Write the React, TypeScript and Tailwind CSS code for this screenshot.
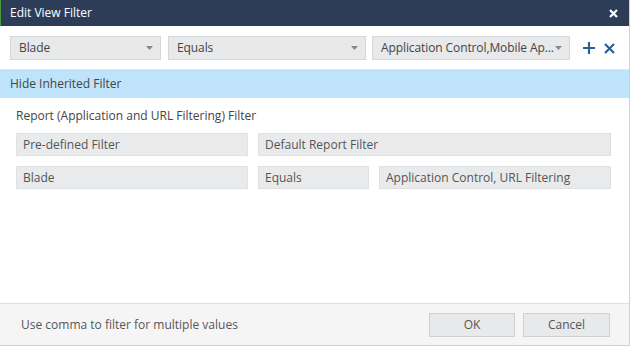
import React from "react";

const Caret = () => (
  <svg width="7" height="4" viewBox="0 0 7 4" className="shrink-0">
    <path d="M0 0 L7 0 L3.5 4 Z" fill="#888" />
  </svg>
);

function Select({ label, w }: { label: string; w: string }) {
  return (
    <div
      className={`${w} h-[24px] flex items-center justify-between pl-[8px] pr-[7px] bg-[#e8e9eb] border border-[#d6d7d9] text-[12px] text-[#444] whitespace-nowrap overflow-hidden tracking-[-0.1px]`}
    >
      <span>{label}</span>
      <Caret />
    </div>
  );
}

function Box({ label, w }: { label: string; w: string }) {
  return (
    <div
      className={`${w} h-[23px] flex items-center pl-[6px] bg-[#e9eaec] border border-[#e0e1e3] text-[12px] text-[#555] whitespace-nowrap`}
    >
      {label}
    </div>
  );
}

export default function App() {
  return (
    <div
      className="w-[632px] h-[347px] bg-white relative"
      style={{ fontFamily: '"Open Sans", "Noto Sans", sans-serif' }}
    >
      <div className="w-[630px] h-[346px] flex flex-col border-r border-b border-[#d0d0d0] bg-white">
        {/* Header */}
        <div className="h-[26px] bg-[#2d3d57] flex items-center justify-between pl-[9px] pr-[11px] border-l border-[#4a9a3a]">
          <span className="text-[12px] text-white">Edit View Filter</span>
          <svg width="9" height="9" viewBox="0 0 9 9">
            <path d="M1 1 L8 8 M8 1 L1 8" stroke="white" strokeWidth="2.2" />
          </svg>
        </div>
        {/* Filter row */}
        <div className="flex items-center pl-[10px] pt-[10px] pb-[9px] border-b border-[#e4e4e4]">
          <Select label="Blade" w="w-[151px]" />
          <div className="w-[7px]" />
          <Select label="Equals" w="w-[198px]" />
          <div className="w-[6px]" />
          <Select label="Application Control,Mobile Ap..." w="w-[198px]" />
          <svg width="12" height="12" viewBox="0 0 12 12" className="ml-[13px]">
            <path d="M6 0 V12 M0 6 H12" stroke="#2e5f96" strokeWidth="2.2" />
          </svg>
          <svg width="11" height="11" viewBox="0 0 11 11" className="ml-[9px]">
            <path d="M1 1 L10 10 M10 1 L1 10" stroke="#2e5f96" strokeWidth="2.2" />
          </svg>
        </div>
        {/* Hide inherited */}
        <div className="h-[28px] bg-[#bee3fb] flex items-center pl-[10px] text-[12px] text-[#444]">
          Hide Inherited Filter
        </div>
        {/* Report section */}
        <div className="flex-1 flex flex-col pl-[16px] pt-[9px]">
          <div className="text-[12px] text-[#444] h-[18px] flex items-center">
            Report (Application and URL Filtering) Filter
          </div>
          <div className="flex gap-[10px] mt-[8px]">
            <Box label="Pre-defined Filter" w="w-[232px]" />
            <Box label="Default Report Filter" w="w-[353px]" />
          </div>
          <div className="flex mt-[10px]">
            <Box label="Blade" w="w-[232px]" />
            <div className="w-[10px]" />
            <Box label="Equals" w="w-[111px]" />
            <div className="w-[10px]" />
            <Box label="Application Control, URL Filtering" w="w-[232px]" />
          </div>
        </div>
        {/* Footer */}
        <div className="h-[42px] bg-[#f5f5f5] border-t border-[#dedede] flex items-center pl-[21px] pr-[19px]">
          <span className="text-[12px] text-[#555] flex-1">Use comma to filter for multiple values</span>
          <div className="w-[86px] h-[24px] bg-[#e8e9eb] border border-[#d0d0d0] flex items-center justify-center text-[12px] text-[#555]">
            OK
          </div>
          <div className="w-[87px] h-[24px] ml-[8px] bg-[#e8e9eb] border border-[#d0d0d0] flex items-center justify-center text-[12px] text-[#555]">
            Cancel
          </div>
        </div>
      </div>
    </div>
  );
}
